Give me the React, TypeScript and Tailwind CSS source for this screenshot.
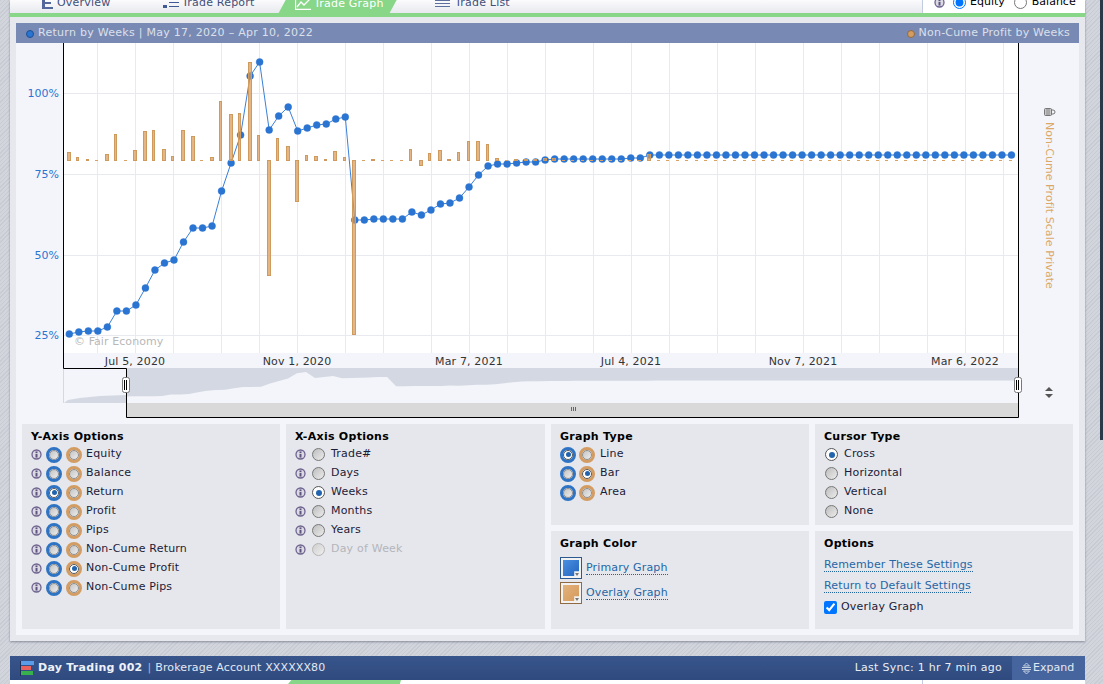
import React from "react";

const ys = [
  334, 332, 331, 331, 327, 311, 311, 305, 288, 270, 263, 260, 242, 228, 228, 226, 191, 163, 135, 76, 62, 130, 116, 107,
  131, 128, 125, 124, 119, 117, 220, 220, 219, 219, 219, 219, 212, 215, 210, 204, 203, 198, 187, 175, 166, 164, 164,
  163, 162, 162, 160, 159, 159, 159, 159, 159, 159, 159, 159, 158, 158, 155,
];
while (ys.length < 100) ys.push(155);
const px = (i: number) => 69.3 + 9.517 * i;

const tops: Record<number, number> = {
  0: 152, 1: 157, 2: 159, 4: 154, 5: 134, 7: 150, 8: 131, 9: 130, 10: 149, 11: 156, 12: 130, 13: 136, 15: 157, 16: 101,
  17: 114, 18: 113, 19: 62, 20: 135, 21: 275, 22: 138, 23: 146, 24: 201, 25: 155, 26: 156, 27: 159, 28: 151, 29: 157,
  30: 334, 32: 159, 36: 149, 37: 165, 38: 153, 39: 150, 40: 159, 41: 152, 42: 141, 43: 141, 44: 144, 45: 158, 47: 159,
  48: 159, 49: 159, 50: 158, 51: 158, 61: 154,
};
const narrow = new Set([1, 2, 3, 5, 6, 9, 11, 14, 16, 18, 20, 22, 25, 27, 29, 31, 36, 38, 41, 42, 44]);
const base = 160;
const vLines = [97, 135, 173, 221, 259, 297, 345, 383, 431, 469, 507, 545, 593, 631, 669, 717, 755, 803, 841, 879, 927, 965, 1003];
const hLines = [93, 174, 255, 335];
const xLabels: [string, number][] = [
  ["Jul 5, 2020", 135],
  ["Nov 1, 2020", 297],
  ["Mar 7, 2021", 469],
  ["Jul 4, 2021", 631],
  ["Nov 7, 2021", 803],
  ["Mar 6, 2022", 965],
];
const yLabels: [string, number][] = [
  ["100%", 93],
  ["75%", 174],
  ["50%", 255],
  ["25%", 335],
];

const nx = (i: number) => 126 + (px(i) - 69.3) * (892 / 943);
const ny = (y: number) => 372 + (y - 62) * 0.09;
const navTop =
  "126,368 " + ys.map((y, i) => `${nx(i).toFixed(1)},${ny(y).toFixed(1)}`).join(" ") + " 1018,379 1018,368";

function Chart() {
  return (
    <svg width={1063} height={375} viewBox="16 43 1063 375" className="block shrink-0">
      <rect x={64} y={43} width={954} height={310} fill="#ffffff" />
      {vLines.map((x) => (
        <line key={x} x1={x + 0.5} x2={x + 0.5} y1={43} y2={353} stroke="#e9eaef" />
      ))}
      {hLines.map((y) => (
        <line key={y} x1={64} x2={1018} y1={y + 0.5} y2={y + 0.5} stroke="#e9eaef" />
      ))}
      <polyline
        points={ys.map((y, i) => `${px(i).toFixed(1)},${y}`).join(" ")}
        fill="none"
        stroke="#3a80d8"
        strokeWidth={1}
      />
      {ys.map((y, i) => (
        <circle key={i} cx={px(i)} cy={y} r={3.5} fill="#2a74d2" stroke="#2a74d2" strokeOpacity={0.4} strokeWidth={1} />
      ))}
      {Array.from({ length: 100 }, (_, i) => {
        const cx = Math.floor(px(i) - 2);
        const top = tops[i];
        if (top === undefined) {
          return <rect key={i} x={cx} y={base} width={3} height={1} fill="#d9a164" />;
        }
        const w = narrow.has(i) ? 2 : 3;
        const y0 = top > base ? base : top;
        const y1 = top > base ? top : base;
        return (
          <rect
            key={i}
            x={cx + 0.5}
            y={y0 + 0.5}
            width={w}
            height={y1 - y0}
            fill="#d99a58"
            fillOpacity={0.72}
            stroke="#cf9a5d"
          />
        );
      })}
      <text x={74} y={345} fontSize={11} fill="#b8b8b8" letterSpacing={0.08}>
        © Fair Economy
      </text>
      {yLabels.map(([t, y]) => (
        <text key={t} x={59} y={y + 4} textAnchor="end" fontSize={11} fill="#2a74d2">
          {t}
        </text>
      ))}
      {xLabels.map(([t, x]) => (
        <text key={t} x={x} y={365} textAnchor="middle" fontSize={11} fill="#333333" letterSpacing={0.15}>
          {t}
        </text>
      ))}

      {/* navigator */}
      <polygon points="64,403 68,400 80,398 100,396 126,395 126,403" fill="#d4d8e2" />
      <polygon points={navTop} fill="#d4d8e2" />
      <rect x={127} y={403} width={891} height={14} fill="#d9d9d9" />
      {[571, 573, 575].map((x) => (
        <line key={x} x1={x + 0.5} x2={x + 0.5} y1={407} y2={411} stroke="#666666" />
      ))}
      <path d="M63.5 43V368.5H126.5V417.5H1018.5V43" fill="none" stroke="#000000" />
      <line x1={63.5} x2={63.5} y1={369} y2={403} stroke="#d4d8e2" />
      {[122, 1014].map((x) => (
        <g key={x}>
          <rect x={x + 0.5} y={377.5} width={7} height={15} rx={2} fill="#ffffff" stroke="#777777" />
          <line x1={x + 2.5} x2={x + 2.5} y1={380} y2={390} stroke="#000000" />
          <line x1={x + 4.5} x2={x + 4.5} y1={380} y2={390} stroke="#000000" />
        </g>
      ))}

      {/* right axis */}
      <rect x={1044.5} y={108.5} width={7} height={7} rx={1} fill="#c9c9c9" stroke="#777777" />
      <path d="M1051 110h2a1.500 1.500 0 0 1 0 4h-2" fill="none" stroke="#777777" />
      <line x1={1047} x2={1047} y1={109} y2={115} stroke="#888888" />
      <line x1={1049} x2={1049} y1={109} y2={115} stroke="#888888" />
      <text transform="translate(1046 122) rotate(90)" fontSize={11} fill="#dca868" letterSpacing={0.06}>
        Non-Cume Profit Scale Private
      </text>
      <path d="M1045 391l4-4 4 4zM1045 394h8l-4 4z" fill="#555555" />
    </svg>
  );
}

function Info() {
  return (
    <svg width={11} height={11} viewBox="0 0 11 11" className="shrink-0">
      <circle cx={5.5} cy={5.5} r={4.5} fill="#dcdbe4" stroke="#6e628f" strokeWidth={1.3} />
      <rect x={4.5} y={2.4} width={2} height={1.6} fill="#5f5480" />
      <rect x={4.5} y={4.8} width={2} height={3.8} fill="#5f5480" />
    </svg>
  );
}

function Radio({ on, disabled }: { on?: boolean; disabled?: boolean }) {
  const ring = disabled ? "border-[#b5b5b5]" : on ? "border-[#555555]" : "border-[#777777]";
  const fill = on
    ? "bg-white"
    : disabled
      ? "bg-[linear-gradient(135deg,#cfcfcf,#efefef)]"
      : "bg-[linear-gradient(135deg,#bdbdbd,#ececec)]";
  return (
    <span className={`flex h-[13px] w-[13px] shrink-0 items-center justify-center rounded-full border ${ring} ${fill}`}>
      {on && <span className="h-[6px] w-[6px] rounded-full bg-[#2263ad]" />}
    </span>
  );
}

function Ring({ color, on }: { color: "blue" | "orange"; on?: boolean }) {
  const c = color === "blue" ? "border-[#2f74c4]" : "border-[#d39c62]";
  const inner = on ? "bg-white border-[#555555]" : "bg-[linear-gradient(135deg,#c4c4c4,#ededed)] border-[#8c8c8c]";
  return (
    <span className={`flex h-[16px] w-[16px] shrink-0 items-center justify-center rounded-full border-[3px] ${c} bg-[#f4f4f4]`}>
      <span className={`flex h-[10px] w-[10px] items-center justify-center rounded-full border ${inner}`}>
        {on && <span className="h-[5px] w-[5px] rounded-full bg-[#2263ad]" />}
      </span>
    </span>
  );
}

function Title({ children }: { children: React.ReactNode }) {
  return <div className="h-[17px] text-[11px] leading-[17px] font-bold tracking-[0.28px] text-black">{children}</div>;
}

function Row({ children }: { children: React.ReactNode }) {
  return <div className="flex h-[19px] items-center text-[11px] tracking-[0.2px] text-[#1b1b38]">{children}</div>;
}

function Panel({ children, className }: { children: React.ReactNode; className?: string }) {
  return <div className={`bg-[#e6e7ec] pt-[4px] pl-[9px] ${className ?? ""}`}>{children}</div>;
}

const yOpts = ["Equity", "Balance", "Return", "Profit", "Pips", "Non-Cume Return", "Non-Cume Profit", "Non-Cume Pips"];
const xOpts = ["Trade#", "Days", "Weeks", "Months", "Years", "Day of Week"];

function GLink({ children, className }: { children: React.ReactNode; className?: string }) {
  return (
    <span className={`border-b border-dotted border-[#23619f] text-[11px] leading-[13px] tracking-[0.14px] text-[#2566a6] ${className ?? ""}`}>
      {children}
    </span>
  );
}

function Swatch({ kind }: { kind: "blue" | "orange" }) {
  const outer = kind === "blue" ? "border-[#2c5a90]" : "border-[#8f6a43]";
  const inner =
    kind === "blue"
      ? "bg-[linear-gradient(135deg,#4a90e0,#2265c0)]"
      : "bg-[linear-gradient(135deg,#e3b27c,#d59a5c)]";
  return (
    <span className={`relative block h-[22px] w-[22px] shrink-0 border ${outer} bg-[#f2f2f2] p-[2px]`}>
      <span className={`block h-full w-full ${inner} [clip-path:polygon(0_0,100%_0,100%_70%,70%_70%,70%_100%,0_100%)]`} />
      <span className="absolute right-[2px] bottom-[2px] h-0 w-0 border-x-[2px] border-t-[3px] border-x-transparent border-t-[#777777]" />
    </span>
  );
}

function Tabs() {
  return (
    <div className="flex h-[13px] overflow-hidden bg-[linear-gradient(#fbfbfd,#e8e9ee)] text-[11px] text-[#3f4f7a]">
      <div className="-mt-[4px] flex h-[14px] w-[912px] items-center tracking-[0.2px] whitespace-nowrap">
        <svg width={11} height={12} viewBox="0 0 11 12" className="ml-[32px] shrink-0" fill="#52689c">
          <rect x={0} y={0} width={3} height={12} />
          <rect x={0} y={0} width={10} height={2} />
          <rect x={0} y={5} width={9} height={2} />
          <rect x={0} y={10} width={11} height={2} />
        </svg>
        <span className="ml-[4px] w-[53px] shrink-0">Overview</span>
        <svg width={16} height={12} viewBox="0 0 16 12" className="ml-[53px] shrink-0" fill="#3f5a94">
          <rect x={0} y={0} width={4} height={3} />
          <rect x={0} y={8} width={4} height={3} />
          <rect x={6} y={1} width={10} height={1} />
          <rect x={6} y={5} width={10} height={1} />
          <rect x={6} y={9} width={10} height={1} />
        </svg>
        <span className="ml-[3px] w-[72px] shrink-0">Trade Report</span>
        <div className="ml-[23px] -mt-[4px] -mb-[6px] flex h-[24px] w-[124px] shrink-0 items-center bg-[#88d688] pl-[18px] text-white [clip-path:polygon(10.500%_0,100%_0,89.500%_100%,0_100%)]">
          <svg width={16} height={12} viewBox="0 0 16 12" fill="none" stroke="#ffffff" strokeWidth={1.3} className="shrink-0">
            <path d="M0.500 0V11.500H16" />
            <path d="M2 9L6 4L9 7L15 1" />
          </svg>
          <span className="ml-[3px]">Trade Graph</span>
        </div>
        <svg width={15} height={12} viewBox="0 0 15 12" className="ml-[34px] shrink-0" fill="#5d6f9d">
          <rect x={0} y={0} width={15} height={1} />
          <rect x={0} y={3} width={15} height={1} />
          <rect x={0} y={6} width={15} height={1} />
          <rect x={0} y={9} width={15} height={1} />
        </svg>
        <span className="ml-[5px] shrink-0">Trade List</span>
      </div>
      <div className="flex h-[13px] flex-1 border-l border-[#c3cbe0] bg-white pl-[11px] text-black">
        <div className="-mt-[5px] flex h-[14px] items-center">
          <Info />
          <input type="radio" defaultChecked name="eq" className="ml-[8px] h-[13px] w-[13px]" />
          <span className="ml-[4px]">Equity</span>
          <input type="radio" name="eq" className="ml-[9px] h-[13px] w-[13px]" />
          <span className="ml-[5px]">Balance</span>
        </div>
      </div>
    </div>
  );
}

export default function App() {
  return (
    <div className="relative h-[684px] w-[1103px] overflow-hidden bg-[repeating-linear-gradient(135deg,#c7cbd3_0px,#c7cbd3_1px,#d2d5dc_1px,#d2d5dc_3px)] pl-[10px] font-['DejaVu_Sans',sans-serif]">
      <div className="absolute top-0 right-0 h-[440px] w-[3px] bg-[#2b3a48]" />
      <div className="w-[1075px] bg-[#e7e8ed] shadow-[0_1px_2px_rgba(60,70,90,0.5)]">
        <Tabs />
        <div className="h-[4px] bg-[#88d688]" />
        <div className="px-[6px] py-[6px]">
          <div className="flex h-[20px] items-center justify-between bg-[#7889b3] pt-[1px] pr-[9px] pl-[10px] text-[11px] text-[#dbe0ec]">
            <div className="flex items-center gap-[4px] tracking-[0.27px]">
              <span className="h-[8px] w-[8px] rounded-full border border-[#1d4f92] bg-[#2a74d2]" />
              <span>Return by Weeks | May 17, 2020 – Apr 10, 2022</span>
            </div>
            <div className="flex items-center gap-[4px] tracking-[0.2px]">
              <span className="h-[8px] w-[8px] rounded-full border border-[#8f6a43] bg-[#d39c62]" />
              <span>Non-Cume Profit by Weeks</span>
            </div>
          </div>
          <div className="bg-[#f4f5fa] pb-[6px]">
            <Chart />
            <div className="mt-[6px] grid grid-cols-[258px_259px_258px_258px] gap-[6px] pl-[6px]">
              <Panel className="h-[205px]">
                <Title>Y-Axis Options</Title>
                {yOpts.map((o, i) => (
                  <Row key={o}>
                    <Info />
                    <span className="ml-[4px]">
                      <Ring color="blue" on={i === 2} />
                    </span>
                    <span className="ml-[4px]">
                      <Ring color="orange" on={i === 6} />
                    </span>
                    <span className="ml-[4px]">{o}</span>
                  </Row>
                ))}
              </Panel>
              <Panel className="h-[205px]">
                <Title>X-Axis Options</Title>
                {xOpts.map((o, i) => (
                  <Row key={o}>
                    <Info />
                    <span className="ml-[6px]">
                      <Radio on={i === 2} disabled={i === 5} />
                    </span>
                    <span className={`ml-[6px] ${i === 5 ? "text-[#b4b5ba]" : ""}`}>{o}</span>
                  </Row>
                ))}
              </Panel>
              <div className="flex h-[205px] flex-col gap-[6px]">
                <Panel className="h-[101px]">
                  <Title>Graph Type</Title>
                  {["Line", "Bar", "Area"].map((o, i) => (
                    <Row key={o}>
                      <Ring color="blue" on={i === 0} />
                      <span className="ml-[3px]">
                        <Ring color="orange" on={i === 1} />
                      </span>
                      <span className="ml-[5px]">{o}</span>
                    </Row>
                  ))}
                </Panel>
                <Panel className="h-[98px]">
                  <Title>Graph Color</Title>
                  <div className="mt-[5px] flex items-center">
                    <Swatch kind="blue" />
                    <GLink className="ml-[4px]">Primary Graph</GLink>
                  </div>
                  <div className="mt-[3px] flex items-center">
                    <Swatch kind="orange" />
                    <GLink className="ml-[4px]">Overlay Graph</GLink>
                  </div>
                </Panel>
              </div>
              <div className="flex h-[205px] flex-col gap-[6px]">
                <Panel className="h-[101px]">
                  <Title>Cursor Type</Title>
                  {["Cross", "Horizontal", "Vertical", "None"].map((o, i) => (
                    <Row key={o}>
                      <span className="ml-[1px]">
                        <Radio on={i === 0} />
                      </span>
                      <span className="ml-[6px]">{o}</span>
                    </Row>
                  ))}
                </Panel>
                <Panel className="h-[98px]">
                  <Title>Options</Title>
                  <div className="mt-[2px] flex h-[21px] items-center">
                    <GLink>Remember These Settings</GLink>
                  </div>
                  <div className="flex h-[21px] items-center">
                    <GLink>Return to Default Settings</GLink>
                  </div>
                  <div className="mt-[1px] flex h-[20px] items-center text-[11px] tracking-[0.2px] text-[#1b1b38]">
                    <input type="checkbox" defaultChecked className="h-[13px] w-[13px]" />
                    <span className="ml-[4px]">Overlay Graph</span>
                  </div>
                </Panel>
              </div>
            </div>
          </div>
        </div>
      </div>

      <div className="mt-[15px] w-[1075px] bg-white">
        <div className="flex h-[24px] items-center justify-between bg-[linear-gradient(#38558c,#2f4a7e)] text-[11px] text-[#e3e9f3]">
          <div className="flex items-center pt-[1px] pl-[10px]">
            <svg width={15} height={15} viewBox="0 0 15 15" className="shrink-0">
              <rect x={0} y={0} width={1} height={15} fill="#1f2f55" />
              <rect x={1} y={0} width={13} height={4} fill="#5a9ce8" />
              <rect x={1} y={5} width={10} height={4} fill="#e8615c" />
              <rect x={1} y={10} width={12} height={4} fill="#37b24d" />
            </svg>
            <span className="ml-[3px] font-bold tracking-[0.27px] text-[#eef2f8]">Day Trading 002</span>
            <span className="ml-[5px] text-[#a9b6d0]">|</span>
            <span className="ml-[4px] tracking-[0.12px]">Brokerage Account XXXXXX80</span>
          </div>
          <div className="flex h-full items-center">
            <span className="mr-[10px] pt-[1px] tracking-[0.26px] text-[#e9edf5]">Last Sync: 1 hr 7 min ago</span>
            <div className="flex h-full w-[73px] items-center bg-[#46659e] pt-[1px] pl-[10px]">
              <svg width={9} height={13} viewBox="0 0 9 13" className="shrink-0" fill="none" stroke="#c3cfe2">
                <path d="M1.500 4L4.500 1L7.500 4H1.500ZM0 5.500H9M0 7.500H9M1.500 9H7.500L4.500 12Z" />
              </svg>
              <span className="ml-[2px] text-[#e3e9f3]">Expand</span>
            </div>
          </div>
        </div>
        <div className="flex h-[4px]">
          <div className="w-[278px]" />
          <div className="w-[113px] bg-[#88d688] [clip-path:polygon(3%_0,100%_0,99%_100%,0_100%)]" />
          <div className="w-[521px]" />
          <div className="w-px bg-[#c3cbe0]" />
        </div>
      </div>
    </div>
  );
}
